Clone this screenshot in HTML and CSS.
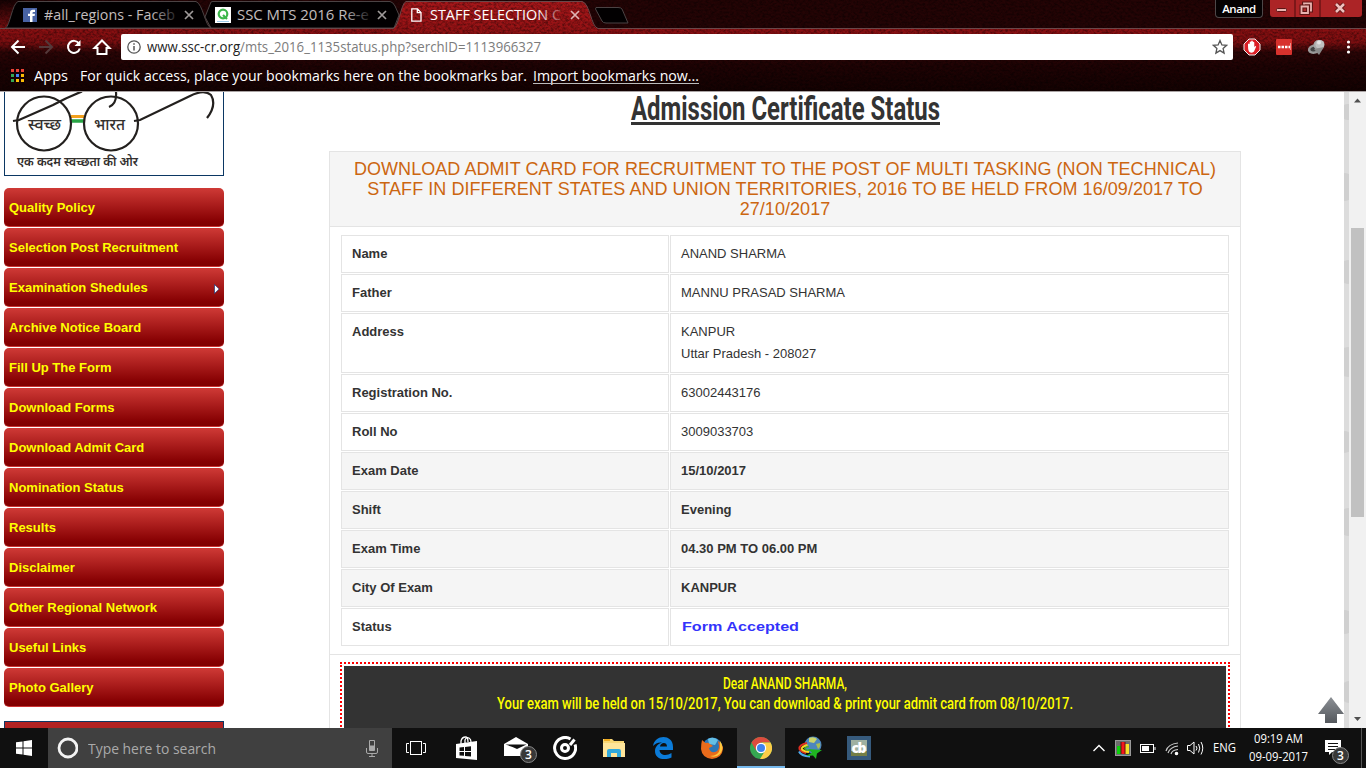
FILE: index.html
```html
<!DOCTYPE html>
<html lang="en">
<head>
<meta charset="utf-8">
<title>STAFF SELECTION COMMISSION</title>
<link rel="stylesheet" href="styles.css">
</head>
<body>
<header class="browser">
  <svg class="theme" width="1366" height="92" viewBox="0 0 1366 92">
    <defs>
      <linearGradient id="bar" x1="0" y1="0" x2="0" y2="1">
        <stop offset="0" stop-color="#8c1012"/><stop offset=".22" stop-color="#7c0e10"/><stop offset=".38" stop-color="#2c0506"/><stop offset=".6" stop-color="#1f0304"/><stop offset="1" stop-color="#140202"/>
      </linearGradient>
      <linearGradient id="edge" x1="0" y1="0" x2="0" y2="1">
        <stop offset="0" stop-color="#160203"/><stop offset="1" stop-color="#7a0e10"/>
      </linearGradient>
      <linearGradient id="act" x1="0" y1="0" x2="0" y2="1">
        <stop offset="0" stop-color="#a8171a"/><stop offset="1" stop-color="#921214"/>
      </linearGradient>
      <linearGradient id="fade" gradientUnits="userSpaceOnUse" x1="0" y1="0" x2="134" y2="0">
        <stop offset=".8" stop-color="#c3bebe"/><stop offset="1" stop-color="#c3bebe" stop-opacity=".1"/>
      </linearGradient>
      <linearGradient id="fadeActive" gradientUnits="userSpaceOnUse" x1="0" y1="0" x2="134" y2="0">
        <stop offset=".8" stop-color="#fff"/><stop offset="1" stop-color="#fff" stop-opacity=".1"/>
      </linearGradient>
      <filter id="grain" x="0" y="0" width="100%" height="100%">
        <feTurbulence type="fractalNoise" baseFrequency=".35 .5" numOctaves="3" seed="7"/>
        <feColorMatrix values="0 0 0 0 0  0 0 0 0 0  0 0 0 0 0  2.4 0 0 0 -.9"/>
      </filter>
    </defs>
    <rect width="1366" height="29" fill="#240405"/>
    <rect width="22" height="29" fill="url(#edge)"/>
    <rect y="28" width="1366" height="64" fill="url(#bar)"/>
    <path d="M392 29C399 28 400 4 407 1H582C590 3 591 28 598 29V33H392Z" fill="url(#act)"/>
    <rect width="1366" height="92" filter="url(#grain)" opacity=".42"/>
    <g fill="#020001" stroke="#4b4344">
      <path d="M5.500 28C10 26 12 4 18 1.500H196C203 4 205 26 211 28Z"/>
      <path d="M205 17L211 2Q212 1.500 213 1.500H390Q393 2 395 6L399 15L394 28H211Z"/>
      <path d="M596 7.500H618Q621 7.500 622 9L628 23H606Q603 23 602 21L595.500 9Z"/>
    </g>
    <path d="M0 28.500H393C399 27 401 3 406 1.500H582C590 3 591 27 598 28.500H1366" fill="none" stroke="#69484a"/>
    <path d="M0 91.500H1366" stroke="#aaa4a4"/>
  </svg>
  <div class="tabs">
    <div class="tab one">
      <svg width="14" height="14"><rect width="14" height="14" fill="#4862a3"/><path d="M7 14V8H5V5.800H7V4.500Q7 1.800 9.800 1.800H12V4H10.500Q9.500 4 9.500 5V5.800H12L11.600 8H9.500V14Z" fill="#fff"/></svg>
      <svg class="txt" width="136" height="22"><text x="0" y="16" textLength="131" lengthAdjust="spacingAndGlyphs">#all_regions - Faceb</text></svg>
      <svg class="x" width="8" height="8"><path d="M0 0L8 8M8 0L0 8"/></svg>
    </div>
    <div class="tab two">
      <svg width="16" height="16"><rect width="16" height="16" fill="#fff"/><circle cx="8" cy="7" r="4.300" fill="none" stroke="#3cb64a" stroke-width="2.200"/><path d="M8 8L12 12" stroke="#3cb64a" stroke-width="2.200"/><path d="M2 14.500H14" stroke="#9ccbe8"/></svg>
      <svg class="txt" width="136" height="22"><text x="0" y="16" textLength="132" lengthAdjust="spacingAndGlyphs">SSC MTS 2016 Re-e</text></svg>
      <svg class="x" width="8" height="8"><path d="M0 0L8 8M8 0L0 8"/></svg>
    </div>
    <div class="tab three">
      <svg width="11" height="14"><path d="M.8.800H6.500L10 4.500V13.200H.8ZM6.300 1V4.700H10" fill="none" stroke="#fff" stroke-width="1.300"/></svg>
      <svg class="txt" width="136" height="22"><text x="0" y="16" textLength="131" lengthAdjust="spacingAndGlyphs">STAFF SELECTION C</text></svg>
      <svg class="x" width="8" height="8"><path d="M0 0L8 8M8 0L0 8"/></svg>
    </div>
    <div class="user">Anand</div>
    <div class="winbtns">
      <svg width="92" height="17"><path d="M25 0V17M50 0V17" stroke="#4d0b0d"/><rect x="6.500" y="8.500" width="10" height="3" rx="1" fill="#e9b3b0" stroke="#5c1414"/><g fill="none"><path d="M34 3.500H41V10.500H34Z" stroke="#5c1414" stroke-width="4"/><path d="M34 3.500H41V10.500H34Z" stroke="#e9b3b0" stroke-width="1.800"/><path d="M31.500 6.500H38V13H31.500Z" fill="#b0282a" stroke="#5c1414" stroke-width="4"/><path d="M31.500 6.500H38V13H31.500Z" stroke="#e9b3b0" stroke-width="1.800"/></g><path d="M66 4L74 12M74 4L66 12" stroke="#5c1414" stroke-width="4.500"/><path d="M66 4L74 12M74 4L66 12" stroke="#efc0be" stroke-width="2.500"/></svg>
    </div>
  </div>
  <div class="toolbar">
    <svg class="nav" width="121" height="26" fill="none" stroke="#fff" stroke-width="2">
      <path d="M25 13H12.500M18.500 6.500L12 13L18.500 19.500"/>
      <path d="M39 13H51.500M45.500 6.500L52 13L45.500 19.500" stroke="#54393a"/>
      <path d="M79 9.500A6 6 0 1 0 79.800 14.500"/><path d="M80.500 6V12H74.500Z" fill="#fff" stroke="none"/>
      <path d="M94.500 14L102 6.500L109.500 14H106.500V20H97.500V14Z"/>
    </svg>
    <div class="omni">
      <svg width="14" height="14" class="info"><circle cx="7" cy="7" r="6.200" fill="none" stroke="#555" stroke-width="1.300"/><path d="M7 6V10.500M7 3.300V4.800" stroke="#555" stroke-width="1.500"/></svg>
      <svg class="url" width="400" height="22"><text x="0" y="16" textLength="394" lengthAdjust="spacingAndGlyphs"><tspan class="host">www.ssc-cr.org</tspan>/mts_2016_1135status.php?serchID=1113966327</text></svg>
      <svg class="star" width="16" height="16"><path d="M8 1.500L9.900 5.900L14.600 6.300L11.100 9.500L12.100 14.100L8 11.600L3.900 14.100L4.900 9.500L1.400 6.300L6.100 5.900Z" fill="none" stroke="#555" stroke-width="1.300"/></svg>
    </div>
    <svg class="exts" width="133" height="26">
      <path d="M16 5H22L27 10V16L22 21H16L11 16V10Z" fill="#dc1f26" stroke="#eee"/><path d="M15 12V10Q16 9 16.700 10V8Q17.500 7 18.200 8V7Q19 6 19.800 7V8Q20.700 7.500 21.300 8.500V13L22.500 12Q23.500 12 23 13L21 17.500Q20 19 17.500 18.500Q15 18 15 12Z" fill="#fff"/>
      <rect x="43" y="5" width="16" height="16" rx="1" fill="#d8322d"/><path d="M45 13H47.500M48.500 13H51M52 13H54.500M55.500 13H57" stroke="#fff" stroke-width="2.500"/><path d="M57.500 9V16" stroke="#ef8d88"/>
      <ellipse cx="81.500" cy="15" rx="5.500" ry="3.500" fill="#444" stroke="#999" stroke-width="2.500" transform="rotate(-15 81.500 15)"/><circle cx="85.500" cy="11" r="5" fill="#a8a8a8"/><circle cx="87" cy="10.500" r="4.500" fill="#c0c0c0"/><circle cx="86" cy="8.500" r="2" fill="#e2e2e2"/><path d="M81 15L91 13L86 21Z" fill="#8b8b8b"/>
      <g fill="#fff"><circle cx="115.500" cy="8" r="1.600"/><circle cx="115.500" cy="13" r="1.600"/><circle cx="115.500" cy="18" r="1.600"/></g>
    </svg>
  </div>
  <div class="marks">
    <svg width="14" height="14"><g fill="#ea4335"><path d="M0 0H3V3H0ZM5 0H8V3H5ZM10 0H13V3H10Z"/></g><path d="M0 5H3V8H0ZM0 10H3V13H0Z" fill="#34a853"/><path d="M5 5H8V8H5Z" fill="#4285f4"/><path d="M10 5H13V8H10ZM5 10H8V13H5ZM10 10H13V13H10Z" fill="#fbbc05"/></svg>
    <svg class="bm" width="46" height="22"><text x="0" y="16" textLength="34" lengthAdjust="spacingAndGlyphs">Apps</text></svg>
    <svg class="bm" width="453" height="22"><text x="0" y="16" textLength="447" lengthAdjust="spacingAndGlyphs">For quick access, place your bookmarks here on the bookmarks bar.</text></svg>
    <svg class="bm" width="168" height="22"><text x="0" y="16" textLength="166" lengthAdjust="spacingAndGlyphs">Import bookmarks now...</text><path d="M0 18.500H166" stroke="#bbb"/></svg>
  </div>
</header>

<main class="page">
  <aside class="side">
    <div class="logo">
      <svg width="218" height="83" viewBox="5 92 218 83" fill="none" stroke="#23201e" stroke-width="2.200">
        <path d="M71 116.500H84" stroke="#f2a01e" stroke-width="3"/><path d="M71 121H84" stroke="#27a344" stroke-width="3.500"/>
        <circle cx="44" cy="123.500" r="27"/><circle cx="111" cy="123.500" r="27"/>
        <path d="M13 121L19 120L53 105Q68 97 82 91.500M116 92Q117 104 109 107M134 121L140 120L190 96Q204 89 211 95Q217 105 207 118"/>
        <g class="hindi"><text x="28" y="130" textLength="33" lengthAdjust="spacingAndGlyphs">स्वच्छ</text><text x="94" y="130" textLength="31" lengthAdjust="spacingAndGlyphs">भारत</text><text x="17" y="166" textLength="121" lengthAdjust="spacingAndGlyphs" class="tag">एक कदम स्वच्छता की ओर</text></g>
      </svg>
    </div>
    <nav class="menu">
      <a>Quality Policy</a><a>Selection Post Recruitment</a>
      <a>Examination Shedules<svg width="6" height="10"><path d="M.5.500L5.200 5L.5 9.500Z" fill="#fff" stroke="#1b3a80" stroke-width=".7"/></svg></a>
      <a>Archive Notice Board</a><a>Fill Up The Form</a><a>Download Forms</a><a>Download Admit Card</a><a>Nomination Status</a><a>Results</a><a>Disclaimer</a><a>Other Regional Network</a><a>Useful Links</a><a>Photo Gallery</a>
    </nav>
    <div class="nextbox"></div>
  </aside>
  <section class="content">
    <svg class="heading" width="312" height="36"><text x="1" y="28" textLength="309" lengthAdjust="spacingAndGlyphs">Admission Certificate Status</text><rect x="1" y="30" width="309" height="3"/></svg>
    <div class="card">
      <h2>DOWNLOAD ADMIT CARD FOR RECRUITMENT TO THE POST OF MULTI TASKING (NON TECHNICAL) STAFF IN DIFFERENT STATES AND UNION TERRITORIES, 2016 TO BE HELD FROM 16/09/2017 TO 27/10/2017</h2>
      <div class="grid">
        <b>Name</b><span>ANAND SHARMA</span>
        <b>Father</b><span>MANNU PRASAD SHARMA</span>
        <b>Address</b><span>KANPUR<br>Uttar Pradesh - 208027</span>
        <b>Registration No.</b><span>63002443176</span>
        <b>Roll No</b><span>3009033703</span>
        <b class="alt">Exam Date</b><b class="alt">15/10/2017</b>
        <b class="alt">Shift</b><b class="alt">Evening</b>
        <b class="alt">Exam Time</b><b class="alt">04.30 PM TO 06.00 PM</b>
        <b class="alt">City Of Exam</b><b class="alt">KANPUR</b>
        <b>Status</b><span><svg class="status" width="120" height="22"><text x="1" y="15" textLength="117" lengthAdjust="spacingAndGlyphs">Form Accepted</text></svg></span>
      </div>
      <div class="notice"><div class="inner">
        <svg width="124" height="20"><text x="0" y="16" textLength="124" lengthAdjust="spacingAndGlyphs">Dear ANAND SHARMA,</text></svg>
        <svg width="577" height="20"><text x="0" y="16" textLength="576" lengthAdjust="spacingAndGlyphs">Your exam will be held on 15/10/2017, You can download &amp; print your admit card from 08/10/2017.</text></svg>
      </div></div>
    </div>
  </section>
  <svg class="totop" width="26" height="26"><defs><linearGradient id="up" x1="0" y1="0" x2="0" y2="1"><stop offset="0" stop-color="#8c9095"/><stop offset="1" stop-color="#54585d"/></linearGradient></defs><path d="M13 0L26 17H19V26H7V17H0Z" fill="url(#up)"/></svg>
  <svg class="pattern" width="5" height="636"><rect width="5" height="636" fill="#dcdcdc"/><g fill="#d0d0d0"><circle cx="4" cy="20" r="8"/><circle cx="0" cy="95" r="14"/><circle cx="5" cy="180" r="12"/><circle cx="5" cy="270" r="15"/><circle cx="0" cy="350" r="11"/><circle cx="5" cy="430" r="14"/><circle cx="0" cy="530" r="12"/><circle cx="6" cy="600" r="11"/></g></svg>
  <div class="scroll">
    <svg width="9" height="5"><path d="M1 4.500L4.500 .5L8 4.500Z" fill="#505050"/></svg>
    <div class="thumb"></div>
    <svg class="down" width="9" height="5"><path d="M1 0H8L4.500 4Z" fill="#505050"/></svg>
  </div>
</main>

<footer class="taskbar">
  <div class="start"><svg width="16" height="16" fill="#fff"><path d="M0 2.300L6.500 1.400V7.500H0ZM7.500 1.200L16 0V7.500H7.500ZM0 8.500H6.500V14.600L0 13.700ZM7.500 8.500H16V16L7.500 14.800Z"/></svg></div>
  <div class="search">
    <svg width="22" height="22"><circle cx="12" cy="11" r="9" fill="none" stroke="#f3f3f3" stroke-width="2.800"/></svg>
    <svg class="hint" width="140" height="22"><text x="0" y="17" textLength="128" lengthAdjust="spacingAndGlyphs">Type here to search</text></svg>
    <svg class="mic" width="12" height="17"><path d="M3.500.500H8.500V10.500H3.500Z" fill="none" stroke="#aaa"/><path d="M3.500 5.500H8.500V10.500H3.500Z" fill="#aaa"/><path d="M.5 8V12Q.5 13.500 2 13.500H10Q11.500 13.500 11.500 12V8M6 13.500V16M3 16.500H9" fill="none" stroke="#aaa"/></svg>
  </div>
  <div class="apps">
    <div class="app view"><svg width="20" height="16" fill="none" stroke="#fff"><rect x="4.500" y="1.500" width="11" height="13"/><path d="M3 3.500H.5V12.500H3M17 3.500H19.500V12.500H17"/></svg></div>
    <div class="app"><svg width="22" height="24"><path d="M0 8L21 5V24L0 22Z" fill="#fff"/><path d="M5 8V5Q6 1 9.500 1Q12 1 12 6M9 7V4Q10 1 13 2Q15 3 15 6" fill="none" stroke="#fff" stroke-width="1.300"/><path d="M3.500 11.500L8 11V15H3.500ZM9 11L15 10.300V15H9ZM3.500 16H8V19.800L3.500 19.400ZM9 16H15V20.500L9 20Z" fill="#101010"/></svg></div>
    <div class="app"><svg class="mail" width="34" height="28"><path d="M0 9L12 2L24 9V21H0Z" fill="#fff"/><path d="M1.500 9.500H22.500L13 14L8.500 12Z" fill="#101010"/><circle cx="24.500" cy="19.500" r="8" fill="#383838" stroke="#878787"/><text class="num" x="21" y="24">3</text></svg></div>
    <div class="app"><svg width="24" height="24" fill="none" stroke="#fff"><path d="M17.500 3A10.500 10.500 0 1 0 22 8.500" stroke-width="3"/><circle cx="12" cy="12" r="3.500" stroke-width="3"/><path d="M17 9L21.500 3.500" stroke-width="3"/></svg></div>
    <div class="app"><svg width="22" height="20"><path d="M0 1H9L11 3H21V19H0Z" fill="#f8d775"/><path d="M0 5H22V19H0Z" fill="#ffe59a"/><path d="M1 1H7V3H1Z" fill="#f0ab20"/><path d="M4 19V13Q4 11 6 11H16Q18 11 18 13V19H14V15H8V19Z" fill="#31a9dc"/></svg></div>
    <div class="app"><svg width="20" height="22"><path d="M0 9C2 -3 20 -3 20 10V13H6.500C7 19 14 19 18.500 16V20.500C11 24 2 22 2 14C2 9 6 6.500 9 5.500C5 5 2 7 0 9ZM7 9.500H14C14 4.500 7.500 5 7 9.500Z" fill="#0b7bd8" fill-rule="evenodd"/></svg></div>
    <div class="app"><svg width="22" height="22"><circle cx="11.500" cy="10.500" r="10" fill="#2c76b6"/><path d="M7 2Q12 -1 17 3L14 8L8 7Z" fill="#64bfe5"/><path d="M1 3L4.500 6Q7 5 9 7L12 9L8 11Q9 16 14 15Q18 14 18 9L17 4Q22 7 22 12Q21 21 11 22Q1 21 0 12Q0 7 1 3Z" fill="#e96b1b"/><path d="M19 4Q24 11 19 17Q15 21 9 19Q18 19 19 11Z" fill="#ffc83c"/></svg></div>
    <div class="app active"><svg width="22" height="22"><circle cx="11" cy="11" r="11" fill="#35a852"/><path d="M1.500 5.500A11 11 0 0 1 20.500 5.500H11L6 13.500Z" fill="#dd4b3e"/><path d="M20.500 5.500A11 11 0 0 1 10 22L15.500 13L12 5.500Z" fill="#fccd48"/><circle cx="11" cy="11" r="5.200" fill="#fff"/><circle cx="11" cy="11" r="4" fill="#3f82ee"/></svg></div>
    <div class="app"><svg width="26" height="24"><circle cx="16" cy="9" r="8.500" fill="#4d86bd"/><path d="M12 2Q17 0 20 3L17 7L12 6Z" fill="#cbd46b"/><path d="M19 8L23 7Q24 11 21 13Z" fill="#a9bf50"/><g fill="none"><path d="M10 7Q1.500 9 2.500 13Q4 16 9 17" stroke="#df2d20" stroke-width="2"/><path d="M10.500 9Q3.500 11 5 13.500Q7 15.500 12 16" stroke="#f5d421" stroke-width="2"/><path d="M12 10.500Q7 11.500 8 13Q10 14.500 14 14.500" stroke="#3fae3a" stroke-width="1.500"/><path d="M2 15.500Q4 20 13 20.500" stroke="#4da9e8" stroke-width="2"/></g><path d="M11 13L25 14L20 17.500L19 23L16 19.500L9 20L15 16.500Z" fill="#1fb522"/></svg></div>
    <div class="app"><svg width="24" height="24"><rect width="24" height="24" fill="#365a7c"/><rect x="4" y="4" width="16" height="16" fill="#9fb0a0"/><rect x="4" y="15" width="16" height="5" fill="#747f46"/><text class="cb" x="4.500" y="17" textLength="15">cb</text></svg></div>
  </div>
  <div class="tray">
    <svg width="120" height="24" viewBox="1090 736 120 24" fill="none" stroke="#fff">
      <path d="M1093.500 751L1099 745.500L1104.500 751" stroke-width="1.400"/>
      <rect x="1115.500" y="740.500" width="15" height="15" fill="#6d6d6d" stroke="#999"/><g stroke="none"><path d="M1117 746H1121V754H1117Z" fill="#0ad00a"/><path d="M1121 742H1125V754H1121Z" fill="#f4161c"/><path d="M1125 744H1129V754H1125Z" fill="#f6e02a"/><path d="M1120.500 742H1121.500V754H1120.500ZM1124.500 742H1125.500V754H1124.500Z" fill="#5c1010"/></g>
      <rect x="1140.500" y="744.500" width="13" height="8"/><path d="M1142 746H1149V751H1142Z" fill="#fff" stroke="none"/><path d="M1155 747V750"/>
      <g stroke-width="1.200"><path d="M1166 751Q1168 744 1178 743M1168 753Q1170 747 1178 746M1171 754Q1172 750 1178 749.500" stroke="#ccc"/><circle cx="1176.500" cy="753.500" r="1.200" fill="#fff"/></g>
      <path d="M1187.500 745.500H1190L1194 742V754L1190 750.500H1187.500Z"/><path d="M1196 746Q1198 748 1196 750.500M1198.500 744Q1201 748 1198.500 752.500M1201 742Q1204.500 748 1201 754.500"/>
    </svg>
    <svg class="lang" width="24" height="20"><text x="0" y="14" textLength="23" lengthAdjust="spacingAndGlyphs">ENG</text></svg>
    <div class="clock"><svg width="60" height="18"><text x="5" y="13" textLength="49" lengthAdjust="spacingAndGlyphs">09:19 AM</text></svg><svg width="60" height="18"><text x="0" y="13" textLength="59" lengthAdjust="spacingAndGlyphs">09-09-2017</text></svg></div>
    <svg class="action" width="26" height="26"><path d="M0 1H16V13H7L4 16V13H0Z" fill="#fff"/><path d="M3 4.500H13M3 7.500H13M3 10.500H10" stroke="#101010"/><circle cx="15.500" cy="16.500" r="8" fill="#383838" stroke="#878787"/><text class="num" x="12" y="21">3</text></svg>
    <div class="peek"></div>
  </div>
</footer>
</body>
</html>
```
FILE: styles.css
```css
* { box-sizing: border-box; }
body { margin: 0; width: 1366px; height: 768px; overflow: hidden; background: #fff; font-family: "Liberation Sans", Arial, sans-serif; }
svg { display: block; flex: none; }

/* browser frame */
.browser { position: relative; height: 92px; font-family: "Open Sans", "Noto Sans", sans-serif; background: #150203; overflow: hidden; }
.theme { position: absolute; inset: 0; }
.tabs, .toolbar, .marks { position: relative; display: flex; align-items: center; }
.tabs { height: 29px; }
.tab { display: flex; align-items: center; height: 29px; }
.one { width: 205px; padding-left: 23px; }
.two { width: 193px; padding-left: 10px; }
.three { width: 200px; padding-left: 13px; }
.txt { margin-left: 7px; font-size: 15px; fill: url(#fade); }
.two .txt { margin-left: 6px; }
.three .txt { fill: url(#fadeActive); margin-left: 8px; }
.x { margin-left: 5px; stroke: #a09a9a; stroke-width: 1.7; overflow: visible; }
.three .x { stroke: #e0b4b4; }
.user { align-self: flex-start; width: 48px; height: 18px; margin-left: 617px; border: 1px solid #4d4748; border-top: 0; border-radius: 0 0 4px 4px; background: #050102; color: #fff; font: 600 11.5px/18px "Open Sans", sans-serif; text-align: center; letter-spacing: -.5px; }
.winbtns { align-self: flex-start; height: 17px; margin-left: 7px; background: #ac2426; border-radius: 0 0 3px 3px; }
.toolbar { height: 26px; margin-top: 5px; }
.omni { display: flex; align-items: center; width: 1112px; height: 26px; padding: 0 5px 0 6px; background: #fff; border-radius: 2px; }
.url { margin-left: 6px; font-size: 14px; fill: #7c7c7c; }
.host { fill: #222; }
.star { margin-left: auto; }
.marks { height: 31px; padding-left: 11px; gap: 0; }
.bm { font-size: 15px; fill: #fff; }
.marks svg:first-child { margin-right: 9px; }

/* visited page */
.page { position: relative; display: flex; height: 636px; overflow: hidden; background: #fff; }
.side { width: 220px; margin-left: 4px; flex: none; }
.logo { height: 84px; border: 1px solid #0b3763; border-top: 0; overflow: hidden; }
.hindi { stroke: none; fill: #33302e; font: 500 16px "Noto Sans Devanagari", "Noto Sans", sans-serif; }
.tag { font-size: 13px; font-weight: 600; }
.menu { display: flex; flex-direction: column; gap: 1px; margin-top: 12px; }
.menu a { display: flex; align-items: center; justify-content: space-between; height: 39px; padding: 0 4px 0 5px; border-radius: 5px; border-bottom: 1px solid #c33; background: linear-gradient(#cf3a36, #860002 88%, #800000); color: #ff0; font-size: 13px; font-weight: bold; }
.menu svg { margin-top: 4px; }
.nextbox { height: 30px; margin-top: 14px; border: 1px solid #0b3763; background: #b22222; }
.content { width: 912px; margin-left: 105px; flex: none; }
.heading { margin-left: 301px; fill: #333; font: bold 34px Roboto, sans-serif; }
.card { margin-top: 23px; border: 1px solid #e4e4e4; }
h2 { height: 75px; margin: 0; padding: 7px 20px 0; border-bottom: 1px solid #e4e4e4; background: #f5f5f5; color: #cc6610; font: 18px/20px "Liberation Sans", Arial, sans-serif; letter-spacing: .055px; text-align: center; }
.grid { display: grid; grid-template-columns: 328px 559px; gap: 1px; padding: 8px 11px; border-bottom: 1px solid #e4e4e4; font-size: 13px; line-height: 22px; color: #333; }
.grid > * { min-height: 38px; padding: 7px 10px; border: 1px solid #e4e4e4; }
.alt { background: #f5f5f5; }
.status { font-weight: bold; font-size: 13px; fill: #3333fb; }
.notice { width: 890px; height: 120px; margin: 7px 10px; padding: 2px; border: 2px dotted #f00; }
.inner { display: flex; flex-direction: column; align-items: center; height: 100%; padding-top: 7px; background: #333; fill: #ff0; font: 500 17px Roboto, sans-serif; }
.totop { position: absolute; left: 1318px; top: 605px; }
.pattern { margin-left: auto; }
.scroll { width: 17px; background: #f1f1f1; display: flex; flex-direction: column; align-items: center; padding: 6px 0; }
.thumb { width: 13px; height: 289px; margin-top: 125px; background: #c1c1c1; }
.down { margin-top: auto; }

/* taskbar */
.taskbar { display: flex; height: 40px; background: #101010; font-family: "Open Sans", "Noto Sans", sans-serif; }
.start { display: flex; width: 48px; align-items: center; justify-content: center; }
.search { display: flex; align-items: center; width: 344px; padding: 0 14px 0 8px; background: #404040; }
.hint { margin-left: 10px; font-size: 15px; fill: #aaa; }
.mic { margin-left: auto; }
.apps { display: flex; gap: 1px; margin-left: 2px; }
.app { display: flex; align-items: center; justify-content: center; width: 48px; height: 40px; }
.view { padding-right: 4px; }
.mail { margin-left: 10px; margin-top: 2px; }
.active { background: #333; border-bottom: 2px solid #76b9ed; padding-top: 2px; }
.num { fill: #fff; font-size: 12px; font-weight: 600; }
.cb { fill: #fff; font-size: 14px; font-weight: 800; }
.tray { display: flex; align-items: center; width: 276px; margin-left: auto; fill: #fff; font-size: 12px; }
.lang { margin-left: 3px; }
.clock { display: flex; flex-direction: column; margin-left: 12px; }
.action { margin-left: 16px; margin-top: 8px; }
.peek { width: 1px; height: 40px; margin-left: 10px; background: #555; }
```
